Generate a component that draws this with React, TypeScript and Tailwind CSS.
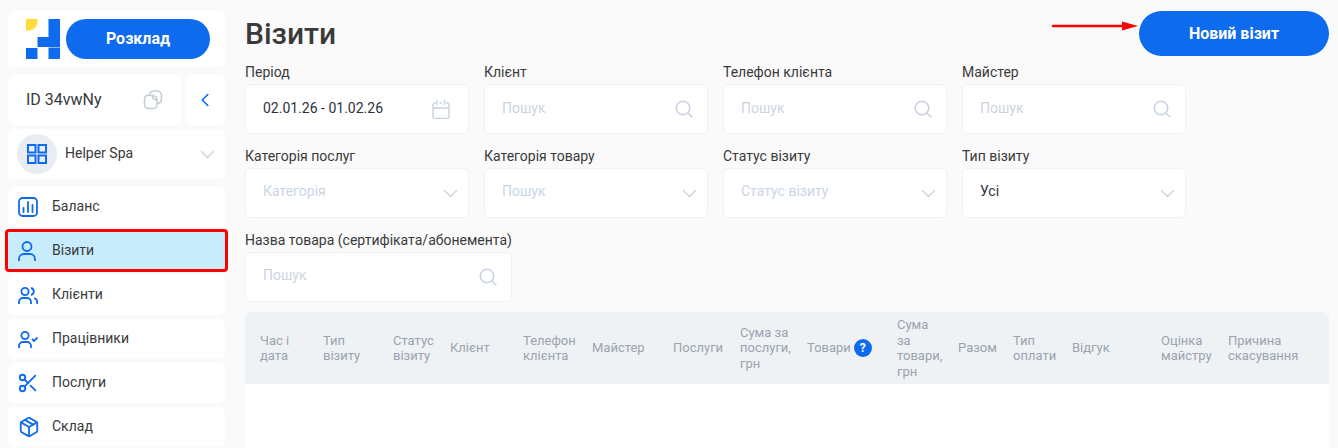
import React from "react";
import { ChevronLeft, Package, Scissors } from "lucide-react";

const BLUE = "#0f6bee";
const MUTED = "#c9d3e0";

const Logo = () => (
  <svg width="34" height="40" viewBox="0 0 34 40" className="shrink-0">
    <path d="M0 0h11.500v3A8.500 8.500 0 0 1 3 11.500H0z" fill="#ffdc3c" />
    <path d="M22.500 0H34v28H11.500V18h11z" fill={BLUE} />
    <path d="M0 29h11.500v11H0z" fill={BLUE} />
    <path d="M22.500 28.500H34V39a1 1 0 0 1-1 1H22.500z" fill={BLUE} />
  </svg>
);

const CopyIcon = () => (
  <svg width="20" height="20" viewBox="0 0 20 20" fill="none" stroke="#c3ccd9" strokeWidth="1.600">
    <path d="M6.500 4.500c.5-2 2-3.500 4-3.500h3.500a4.500 4.500 0 0 1 4.500 4.500V9a4 4 0 0 1-4 4.500" />
    <path d="M5.500 5.500h4a4.500 4.500 0 0 1 4.500 4.500v4.500a4 4 0 0 1-4 4H5.500a4 4 0 0 1-4-4v-5a4.500 4.500 0 0 1 4-4.500z" />
    <path d="M9.500 5.700c0 2.500 1.500 4 4.300 4.300" />
  </svg>
);

const GridIcon = () => (
  <svg width="20" height="20" viewBox="0 0 20 20" fill="none" stroke={BLUE} strokeWidth="2">
    <rect x="1" y="1" width="7.500" height="7.500" />
    <rect x="11.500" y="1" width="7.500" height="7.500" />
    <rect x="1" y="11.500" width="7.500" height="7.500" />
    <rect x="11.500" y="11.500" width="7.500" height="7.500" />
  </svg>
);

const BalanceIcon = () => (
  <svg width="20" height="20" viewBox="0 0 20 20" fill="none" stroke={BLUE} strokeWidth="1.800" strokeLinecap="round">
    <rect x="1" y="1" width="18" height="18" rx="3.500" />
    <path d="M5.500 15v-4M10 15V5M14.500 15V8" />
  </svg>
);

const UserIcon = () => (
  <svg width="18" height="20" viewBox="0 0 18 20" fill="none" stroke={BLUE} strokeWidth="1.800">
    <circle cx="9" cy="5.500" r="4.500" />
    <path d="M1 20v-2a5 5 0 0 1 5-5h6a5 5 0 0 1 5 5v2" />
  </svg>
);

const UsersIcon = () => (
  <svg width="20" height="17" viewBox="0 0 20 17" fill="none" stroke={BLUE} strokeWidth="1.800">
    <circle cx="7" cy="4.500" r="3.600" />
    <path d="M1 17v-2a4 4 0 0 1 4-4h4a4 4 0 0 1 4 4v2" />
    <path d="M13 1c1.800.4 2.800 1.800 2.800 3.500S14.800 7.600 13 8" />
    <path d="M19.200 17v-2a4 4 0 0 0-3-3.800" />
  </svg>
);

const UserCheckIcon = () => (
  <svg width="20" height="17" viewBox="0 0 20 17" fill="none" stroke={BLUE} strokeWidth="1.800">
    <circle cx="7" cy="4.500" r="3.600" />
    <path d="M1 17v-2a4 4 0 0 1 4-4h4a4 4 0 0 1 4 4v2" />
    <path d="M14 8l2 2 3.500-3.500" />
  </svg>
);

const CalendarIcon = () => (
  <svg width="18" height="19" viewBox="0 0 18 19" fill="none" stroke={MUTED} strokeWidth="1.400" className="mr-1">
    <path d="M4 3H3a2 2 0 0 0-2 2v11.500a2 2 0 0 0 2 2h12a2 2 0 0 0 2-2V5a2 2 0 0 0-2-2h-1" />
    <path d="M1 8h16M5 0v5M12.500 0v5M7.500 3h2.500" />
  </svg>
);

const SearchIcon = () => (
  <svg width="18" height="18" viewBox="0 0 18 18" fill="none" stroke={MUTED} strokeWidth="1.600">
    <circle cx="8" cy="8" r="6.800" />
    <path d="M13 13l4.300 4.300" />
  </svg>
);

const Chevron = ({ className }: { className?: string }) => (
  <svg width="15" height="9" viewBox="0 0 15 9" fill="none" stroke={MUTED} strokeWidth="1.300" className={className}>
    <path d="M1 1l6.500 6.500L14 1" />
  </svg>
);

const menu = [
  { label: "Баланс", icon: <BalanceIcon /> },
  { label: "Візити", icon: <UserIcon />, active: true },
  { label: "Клієнти", icon: <UsersIcon /> },
  { label: "Працівники", icon: <UserCheckIcon /> },
  { label: "Послуги", icon: <Scissors size={22} strokeWidth={2} color={BLUE} className="-ml-px" /> },
  { label: "Склад", icon: <Package size={22} strokeWidth={2} color={BLUE} /> },
];

const Field = ({
  label,
  value,
  placeholder,
  icon,
  raised,
  className = "w-[224px]",
}: {
  label: string;
  value?: string;
  placeholder?: string;
  icon: "search" | "down" | "calendar";
  raised?: boolean;
  className?: string;
}) => (
  <div className={className}>
    <div className="-mt-[10px] mb-[1px] h-[22px] whitespace-nowrap text-sm leading-[22px] text-[#3a3a3a]">{label}</div>
    <div className="flex h-[50px] items-center justify-between rounded-md border border-[#f0f1f3] bg-white pl-[17px] pr-[14px] text-sm">
      <span className={`${raised ? "pb-1" : "pb-[2px]"} ${value ? "text-[#2b3240]" : "text-[#cbd5e1]"}`}>
        {value ?? placeholder}
      </span>
      {icon === "search" && <SearchIcon />}
      {icon === "down" && <Chevron className="-mr-[4px]" />}
      {icon === "calendar" && <CalendarIcon />}
    </div>
  </div>
);

const columns = [
  ["Час і", "дата"],
  ["Тип", "візиту"],
  ["Статус", "візиту"],
  ["Клієнт"],
  ["Телефон", "клієнта"],
  ["Майстер"],
  ["Послуги"],
  ["Сума за", "послуги,", "грн"],
  ["Товари"],
  ["Сума", "за", "товари,", "грн"],
  ["Разом"],
  ["Тип", "оплати"],
  ["Відгук"],
  ["Оцінка", "майстру"],
  ["Причина", "скасування"],
];

export default function App() {
  return (
    <div
      className="relative flex h-[448px] w-[1338px] overflow-hidden bg-[#fafafa] text-sm"
      style={{ fontFamily: "Roboto, sans-serif" }}
    >
      <aside className="ml-2 flex w-[217px] shrink-0 flex-col pt-[11px] text-[#3a3a3a]">
        <div className="flex h-[56px] items-center gap-[6px] rounded-md bg-white pl-[18px]">
          <Logo />
          <button className="h-10 w-[144px] rounded-full bg-[#0f6bee] text-base font-bold text-white">Розклад</button>
        </div>
        <div className="mt-2 flex gap-1">
          <div className="flex h-[50px] w-[173px] items-center justify-between rounded-md bg-white pl-[18px] pr-[18px]">
            <span className="text-base">ID 34vwNy</span>
            <CopyIcon />
          </div>
          <div className="flex h-[50px] w-10 items-center justify-center rounded-md bg-white">
            <ChevronLeft size={22} strokeWidth={1.8} color={BLUE} />
          </div>
        </div>
        <div className="mt-1 flex h-[50px] items-center rounded-md bg-white pl-[9px] pr-[10px]">
          <div className="flex h-10 w-10 items-center justify-center rounded-full bg-[#e9edf3]">
            <GridIcon />
          </div>
          <span className="ml-2 pb-[2px] text-sm">Helper Spa</span>
          <Chevron className="ml-auto" />
        </div>
        <nav className="mt-2 flex flex-col gap-1">
          {menu.map((item) => (
            <div
              key={item.label}
              className={
                item.active
                  ? "mt-px mb-[2px] flex h-[37px] items-center rounded-[1px] bg-[#c7edfd] pl-[10px] outline-[3px] outline-[#ff0000]"
                  : "flex h-10 items-center rounded-md bg-white pl-[10px]"
              }
            >
              <span className="flex w-[22px] justify-start">{item.icon}</span>
              <span className="ml-3 pb-[2px]">{item.label}</span>
            </div>
          ))}
        </nav>
      </aside>

      <main className="ml-5 w-[1084px] shrink-0">
        <div className="flex items-start justify-between pt-[11px]">
          <h1 className="text-3xl leading-[45px] font-medium text-[#3a3a3a]">Візити</h1>
          <button className="h-[45px] w-[190px] rounded-full bg-[#0f6bee] text-base font-bold text-white">
            Новий візит
          </button>
        </div>
        <div className="mt-[15px] flex gap-[15px]">
          <Field label="Період" value="02.01.26 - 01.02.26" icon="calendar" />
          <Field label="Клієнт" placeholder="Пошук" icon="search" />
          <Field label="Телефон клієнта" placeholder="Пошук" icon="search" />
          <Field label="Майстер" placeholder="Пошук" icon="search" />
        </div>
        <div className="mt-[21px] flex gap-[15px]">
          <Field label="Категорія послуг" placeholder="Категорія" icon="down" raised />
          <Field label="Категорія товару" placeholder="Пошук" icon="down" raised />
          <Field label="Статус візиту" placeholder="Статус візиту" icon="down" raised />
          <Field label="Тип візиту" value="Усі" icon="down" raised />
        </div>
        <div className="mt-[21px]">
          <Field
            label="Назва товара (сертифіката/абонемента)"
            placeholder="Пошук"
            icon="search"
            raised
            className="w-[267px]"
          />
        </div>
        <div className="mt-[10px] grid h-[72px] grid-cols-[63px_70px_57px_73px_69px_81px_67px_67px_90px_61px_55px_59px_89px_67px_1fr] items-center rounded-t-md bg-[#eff2f5] pl-[15px] text-[13px] leading-[15.500px] text-[#9ba3ae]">
          {columns.map((lines) => (
            <div key={lines.join(" ")} className="flex items-center gap-[3px]">
              <div>
                {lines.map((line) => (
                  <div key={line}>{line}</div>
                ))}
              </div>
              {lines[0] === "Товари" && (
                <span className="flex h-[18px] w-[18px] shrink-0 items-center justify-center rounded-full bg-[#0f6bee] text-xs font-bold text-white">
                  ?
                </span>
              )}
            </div>
          ))}
        </div>
        <div className="h-16 bg-white" />
      </main>

      <svg width="88" height="12" viewBox="0 0 88 12" className="absolute left-[1051px] top-[20px]">
        <path d="M2 6h72" stroke="#ff0000" strokeWidth="2.500" strokeLinecap="round" />
        <path d="M71 1.500l16 4.500-16 4.500z" fill="#ff0000" />
      </svg>
    </div>
  );
}
